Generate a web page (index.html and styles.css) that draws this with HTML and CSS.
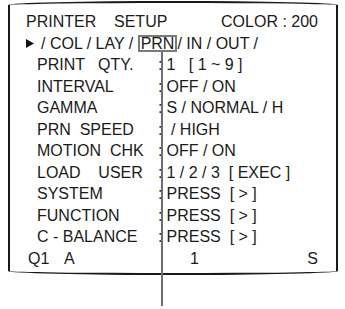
FILE: index.html
```html
<!DOCTYPE html>
<html>
<head>
<meta charset="utf-8">
<link rel="stylesheet" href="styles.css">
</head>
<body>
<div class="figure">
  <div class="screen">
    <div class="head"><span class="t">PRINTER    SETUP</span><span class="t">COLOR : 200</span></div>
    <div class="nav"><svg class="tri" width="8" height="9" viewBox="0 0 8 9"><polygon points="0,0 8,4.5 0,9" fill="#111"/></svg><span class="t">/ COL / LAY / </span><span class="sel">PRN</span><span class="t">/ IN / OUT /</span></div>
    <div class="row"><span class="t">PRINT   QTY.</span><span>:</span><span class="t">1   [ 1 ~ 9 ]</span></div>
    <div class="row"><span class="t">INTERVAL</span><span>:</span><span class="t">OFF / ON</span></div>
    <div class="row"><span class="t">GAMMA</span><span>:</span><span class="t">S / NORMAL / H</span></div>
    <div class="row"><span class="t">PRN  SPEED</span><span>:</span><span class="t"> / HIGH</span></div>
    <div class="row"><span class="t">MOTION  CHK</span><span>:</span><span class="t">OFF / ON</span></div>
    <div class="row"><span class="t">LOAD    USER</span><span>:</span><span class="t">1 / 2 / 3  [ EXEC ]</span></div>
    <div class="row"><span class="t">SYSTEM</span><span>:</span><span class="t">PRESS  [ &gt; ]</span></div>
    <div class="row"><span class="t">FUNCTION</span><span>:</span><span class="t">PRESS  [ &gt; ]</span></div>
    <div class="row"><span class="t">C - BALANCE</span><span>:</span><span class="t">PRESS  [ &gt; ]</span></div>
    <div class="foot"><span>Q1</span><span>A</span><span>1</span><span>S</span></div>
  </div>
  <div class="leader"></div>
</div>
</body>
</html>
```

FILE: styles.css
```css
html, body {
  margin: 0;
  padding: 0;
  background: #ffffff;
}

.figure {
  position: relative;
  width: 345px;
  height: 309px;
  overflow: hidden;
  font-family: "Liberation Sans", Arial, sans-serif;
  font-size: 16px;
  color: #1a1a1a;
}

.screen {
  box-sizing: border-box;
  width: 330px;
  margin: 1px 0 0 8px;
  border: 2px solid #1a1a1a;
  border-radius: 50% / 4px;
  padding: 8px 18px 4px 16px;
  line-height: 21.5px;
}

.t {
  white-space: pre;
}

.head {
  display: flex;
  justify-content: space-between;
}

.nav {
  display: block;
}

.tri {
  vertical-align: 1px;
  margin-right: 7px;
}

.sel {
  display: inline-block;
  line-height: 12px;
  padding: 1px 1px 0 1px;
  border: 2px solid #7a7a7a;
}

.row {
  display: grid;
  grid-template-columns: 121px 8.5px 1fr;
  padding-left: 11px;
}

.foot {
  display: grid;
  grid-template-columns: 36px 126px 1fr auto;
  padding-left: 2px;
}

.leader {
  position: absolute;
  left: 161px;
  top: 52px;
  width: 2px;
  height: 254px;
  background: #6e6e6e;
}
```
